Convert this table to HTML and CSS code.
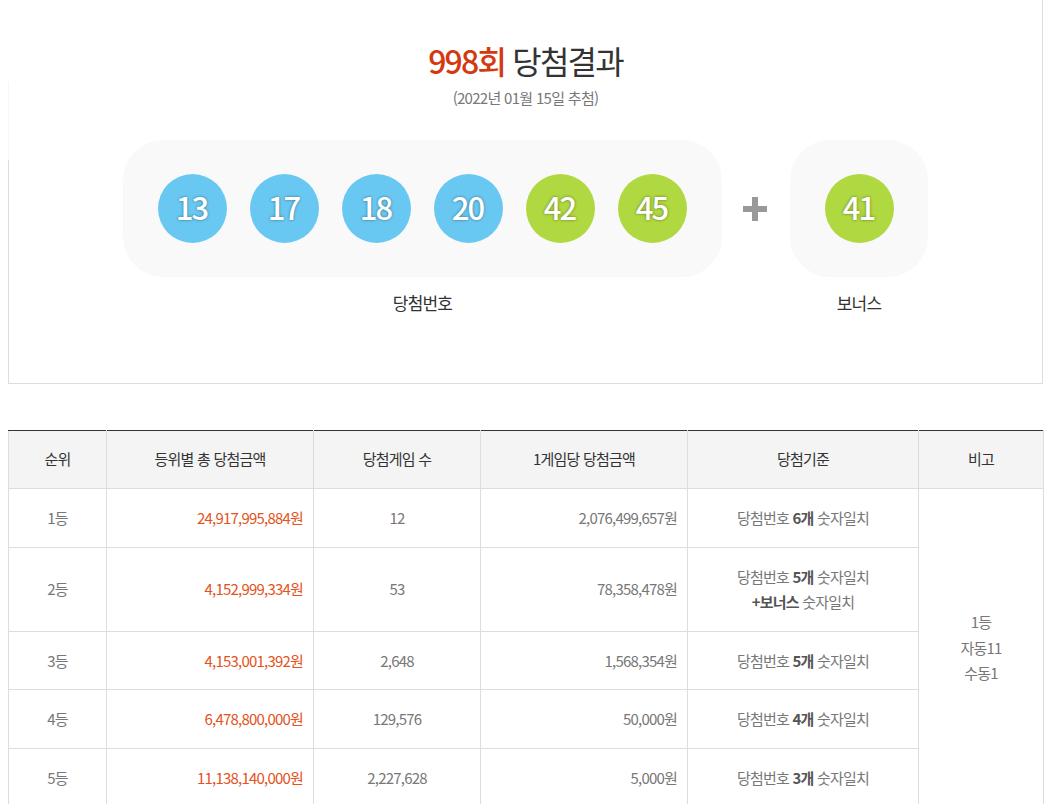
FILE: index.html
```html
<!DOCTYPE html>
<html lang="ko">
<head>
<meta charset="utf-8">
<title>998회 당첨결과</title>
<link rel="stylesheet" href="styles.css">
</head>
<body>
<div class="wrap">
  <section class="result">
    <h2 class="title"><strong>998회</strong> 당첨결과</h2>
    <p class="date">(2022년 01월 15일 추첨)</p>
    <div class="nums">
      <div class="group">
        <div class="box">
          <span class="ball blue">13</span>
          <span class="ball blue">17</span>
          <span class="ball blue">18</span>
          <span class="ball blue">20</span>
          <span class="ball green">42</span>
          <span class="ball green">45</span>
        </div>
        <p class="label">당첨번호</p>
      </div>
      <div class="plus"><span class="cross"></span></div>
      <div class="group">
        <div class="box">
          <span class="ball green">41</span>
        </div>
        <p class="label">보너스</p>
      </div>
    </div>
  </section>

  <table class="prize">
    <colgroup>
      <col class="c1"><col class="c2"><col class="c3"><col class="c4"><col class="c5"><col class="c6">
    </colgroup>
    <thead>
      <tr>
        <th>순위</th>
        <th>등위별 총 당첨금액</th>
        <th>당첨게임 수</th>
        <th>1게임당 당첨금액</th>
        <th>당첨기준</th>
        <th>비고</th>
      </tr>
    </thead>
    <tbody>
      <tr>
        <td>1등</td>
        <td class="amt">24,917,995,884원</td>
        <td>12</td>
        <td class="right">2,076,499,657원</td>
        <td>당첨번호 <b>6개</b> 숫자일치</td>
        <td class="note" rowspan="5">1등<br>자동11<br>수동1</td>
      </tr>
      <tr>
        <td>2등</td>
        <td class="amt">4,152,999,334원</td>
        <td>53</td>
        <td class="right">78,358,478원</td>
        <td>당첨번호 <b>5개</b> 숫자일치<br><b>+보너스</b> 숫자일치</td>
      </tr>
      <tr>
        <td>3등</td>
        <td class="amt">4,153,001,392원</td>
        <td>2,648</td>
        <td class="right">1,568,354원</td>
        <td>당첨번호 <b>5개</b> 숫자일치</td>
      </tr>
      <tr>
        <td>4등</td>
        <td class="amt">6,478,800,000원</td>
        <td>129,576</td>
        <td class="right">50,000원</td>
        <td>당첨번호 <b>4개</b> 숫자일치</td>
      </tr>
      <tr>
        <td>5등</td>
        <td class="amt">11,138,140,000원</td>
        <td>2,227,628</td>
        <td class="right">5,000원</td>
        <td>당첨번호 <b>3개</b> 숫자일치</td>
      </tr>
    </tbody>
  </table>
</div>
</body>
</html>
```

FILE: styles.css
```css
html, body {
  margin: 0;
  padding: 0;
  background: #fff;
}
body {
  font-family: "Noto Sans CJK KR", "Noto Sans", sans-serif;
  color: #333;
}
.wrap {
  margin: 0 8px;
}
.result {
  position: relative;
  border: 1px solid #ddd;
  border-top: none;
  padding: 40px 0 68px;
  text-align: center;
}
/* faded upper part of the left edge */
.result::before {
  content: "";
  position: absolute;
  left: -1px;
  top: 0;
  width: 1px;
  height: 160px;
  background: linear-gradient(to bottom, #fff 0, #fff 82px, #f7f7f7 82px, #f7f7f7 160px);
}
.title {
  margin: 0;
  font-size: 32px;
  line-height: 40px;
  font-weight: 400;
  letter-spacing: -1.8px;
  color: #333;
}
.title strong {
  color: #d33a12;
  font-weight: 500;
}
.date {
  margin: 8px 0 0;
  font-size: 15px;
  line-height: 20px;
  color: #777;
  letter-spacing: -0.7px;
}
.nums {
  margin-top: 32px;
  display: flex;
  justify-content: center;
  align-items: flex-start;
}
.group {
  display: flex;
  flex-direction: column;
  align-items: center;
}
.box {
  display: flex;
  gap: 23px;
  padding: 34px 35px;
  background: #f9f9f9;
  border-radius: 40px;
}
.group:last-child .box {
  padding: 34px 34px 34px 35px;
}
.ball {
  width: 69px;
  height: 69px;
  box-sizing: border-box;
  padding-bottom: 4px;
  border-radius: 50%;
  display: flex;
  align-items: center;
  justify-content: center;
  color: #fff;
  font-size: 31px;
  font-weight: 500;
  letter-spacing: -1.8px;
  text-indent: -1.8px;
  text-shadow: 0 0 3px rgba(0, 0, 0, 0.45);
}
.blue { background: #69c8f2; }
.green { background: #b0d840; }
.label {
  margin: 14px 0 0;
  font-size: 17px;
  line-height: 24px;
  color: #333;
  letter-spacing: -0.8px;
}
.plus {
  width: 24px;
  height: 137px;
  margin: 0 23px 0 21px;
  display: flex;
  align-items: center;
  justify-content: center;
}
.cross {
  position: relative;
  width: 24px;
  height: 24px;
}
.cross::before,
.cross::after {
  content: "";
  position: absolute;
  background: #999;
}
.cross::before {
  left: 0;
  right: 0;
  top: 9px;
  height: 6px;
}
.cross::after {
  top: 0;
  bottom: 0;
  left: 9px;
  width: 6px;
}

.prize {
  margin-top: 46px;
  width: 100%;
  border-collapse: collapse;
  table-layout: fixed;
  font-size: 15px;
  letter-spacing: -0.8px;
}
.c1 { width: 98px; }
.c2 { width: 207px; }
.c3 { width: 167px; }
.c4 { width: 207px; }
.c5 { width: 231px; }
.c6 { width: 125px; }
.prize th {
  background: #f4f4f4;
  border: 1px solid #ddd;
  border-top: 1px solid #333;
  padding: 15px 0 16px;
  line-height: 26px;
  font-weight: 400;
  color: #333;
  font-size: 15px;
}
.prize td {
  border: 1px solid #ddd;
  padding: 16px 10px;
  line-height: 25.5px;
  text-align: center;
  color: #777;
}
.prize td b {
  color: #555;
  font-weight: 700;
}
.prize td.amt {
  text-align: right;
  color: #e4531c;
}
.prize td.right {
  text-align: right;
}
.prize td.note {
  vertical-align: middle;
}
```
